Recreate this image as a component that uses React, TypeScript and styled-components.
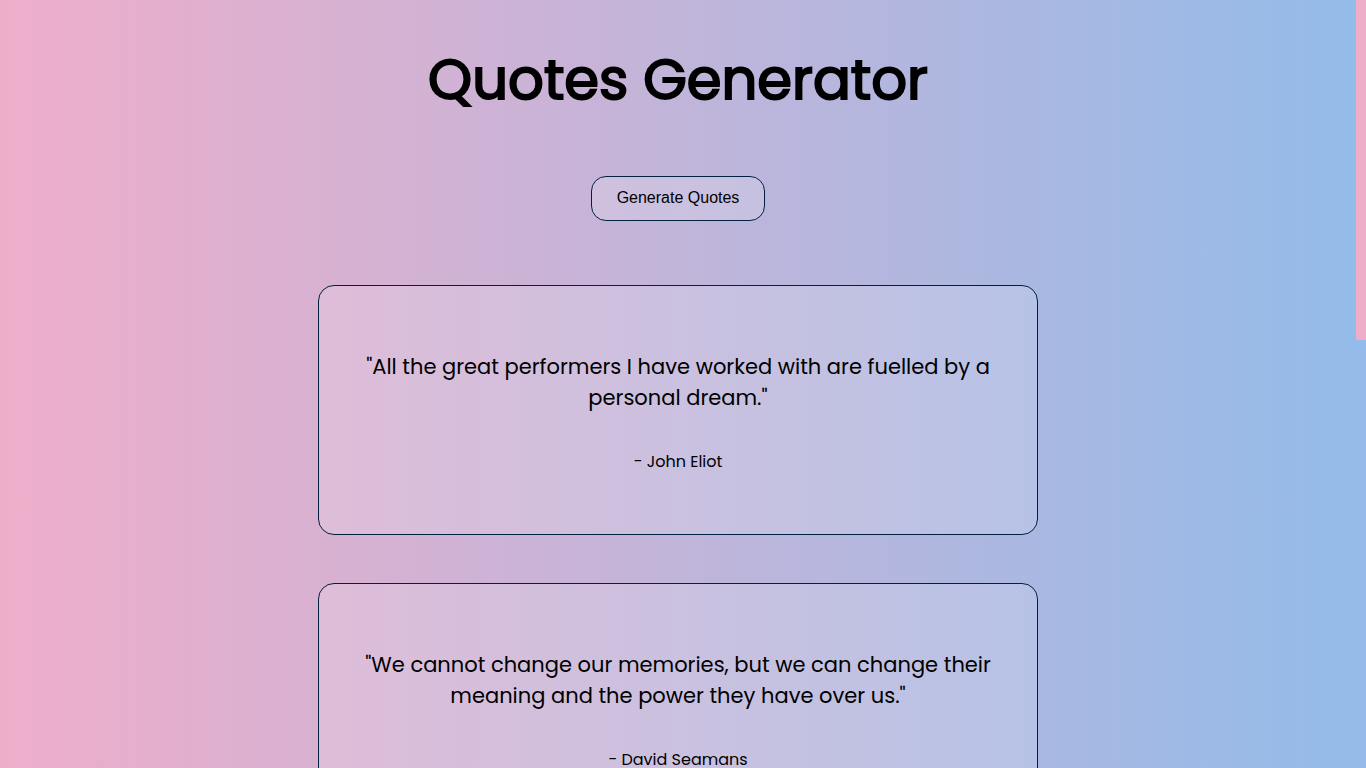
import React from "react";
import styled, { createGlobalStyle } from "styled-components";

const GlobalStyle = createGlobalStyle`
  *, *::before, *::after { box-sizing: border-box; }
  body {
    margin: 0;
    color: #000;
    font-family: Poppins, Inter, "Open Sans", sans-serif;
  }
`;

const Shell = styled.div`
  display: flex;
  height: 100vh;
  overflow: hidden;
`;

const Page = styled.main`
  flex: 1;
  display: flex;
  flex-direction: column;
  align-items: center;
  padding: 32px 8px 0;
  overflow: hidden;
  background: linear-gradient(90deg, #eeaeca 0%, #94bbe9 100%);
`;

const Title = styled.h1`
  flex: none;
  margin: 0;
  font-size: 56px;
  line-height: 96px;
  font-weight: 400;
  -webkit-text-stroke: 2px #000;
  text-align: center;
`;

const GenerateButton = styled.button`
  flex: none;
  margin: 48px 0 64px;
  padding: 12px 25px 13px;
  border: 1px solid #02213f;
  border-radius: 15px;
  background: rgba(255, 255, 255, 0.16);
  color: #000;
  font-family: "Liberation Sans", Arial, sans-serif;
  font-size: 16px;
  line-height: 18px;
  cursor: pointer;
`;

const QuoteList = styled.section`
  flex: none;
  display: flex;
  flex-direction: column;
  gap: 48px;
  width: 100%;
  max-width: 720px;
`;

const Card = styled.figure`
  display: flex;
  flex-direction: column;
  gap: 37px;
  margin: 0;
  padding: 65px 40px 60px;
  border: 1px solid #02213f;
  border-radius: 16px;
  background: rgba(255, 255, 255, 0.16);
  text-align: center;
`;

const QuoteText = styled.blockquote`
  margin: 0;
  font-size: 21px;
  line-height: 31px;
`;

const Author = styled.figcaption`
  font-size: 16px;
  line-height: 24px;
`;

const ScrollTrack = styled.div`
  flex: none;
  width: 10px;
  background: #94bbe9;
`;

const ScrollThumb = styled.div`
  height: 44.3%;
  background: #eeaeca;
`;

const quotes = [
  {
    text: "All the great performers I have worked with are fuelled by a personal dream.",
    author: "John Eliot",
  },
  {
    text: "We cannot change our memories, but we can change their meaning and the power they have over us.",
    author: "David Seamans",
  },
];

export default function App() {
  return (
    <>
      <GlobalStyle />
      <Shell>
        <Page>
          <Title>Quotes Generator</Title>
          <GenerateButton type="button">Generate Quotes</GenerateButton>
          <QuoteList>
            {quotes.map((quote) => (
              <Card key={quote.author}>
                <QuoteText>"{quote.text}"</QuoteText>
                <Author>- {quote.author}</Author>
              </Card>
            ))}
          </QuoteList>
        </Page>
        <ScrollTrack aria-hidden="true">
          <ScrollThumb />
        </ScrollTrack>
      </Shell>
    </>
  );
}
